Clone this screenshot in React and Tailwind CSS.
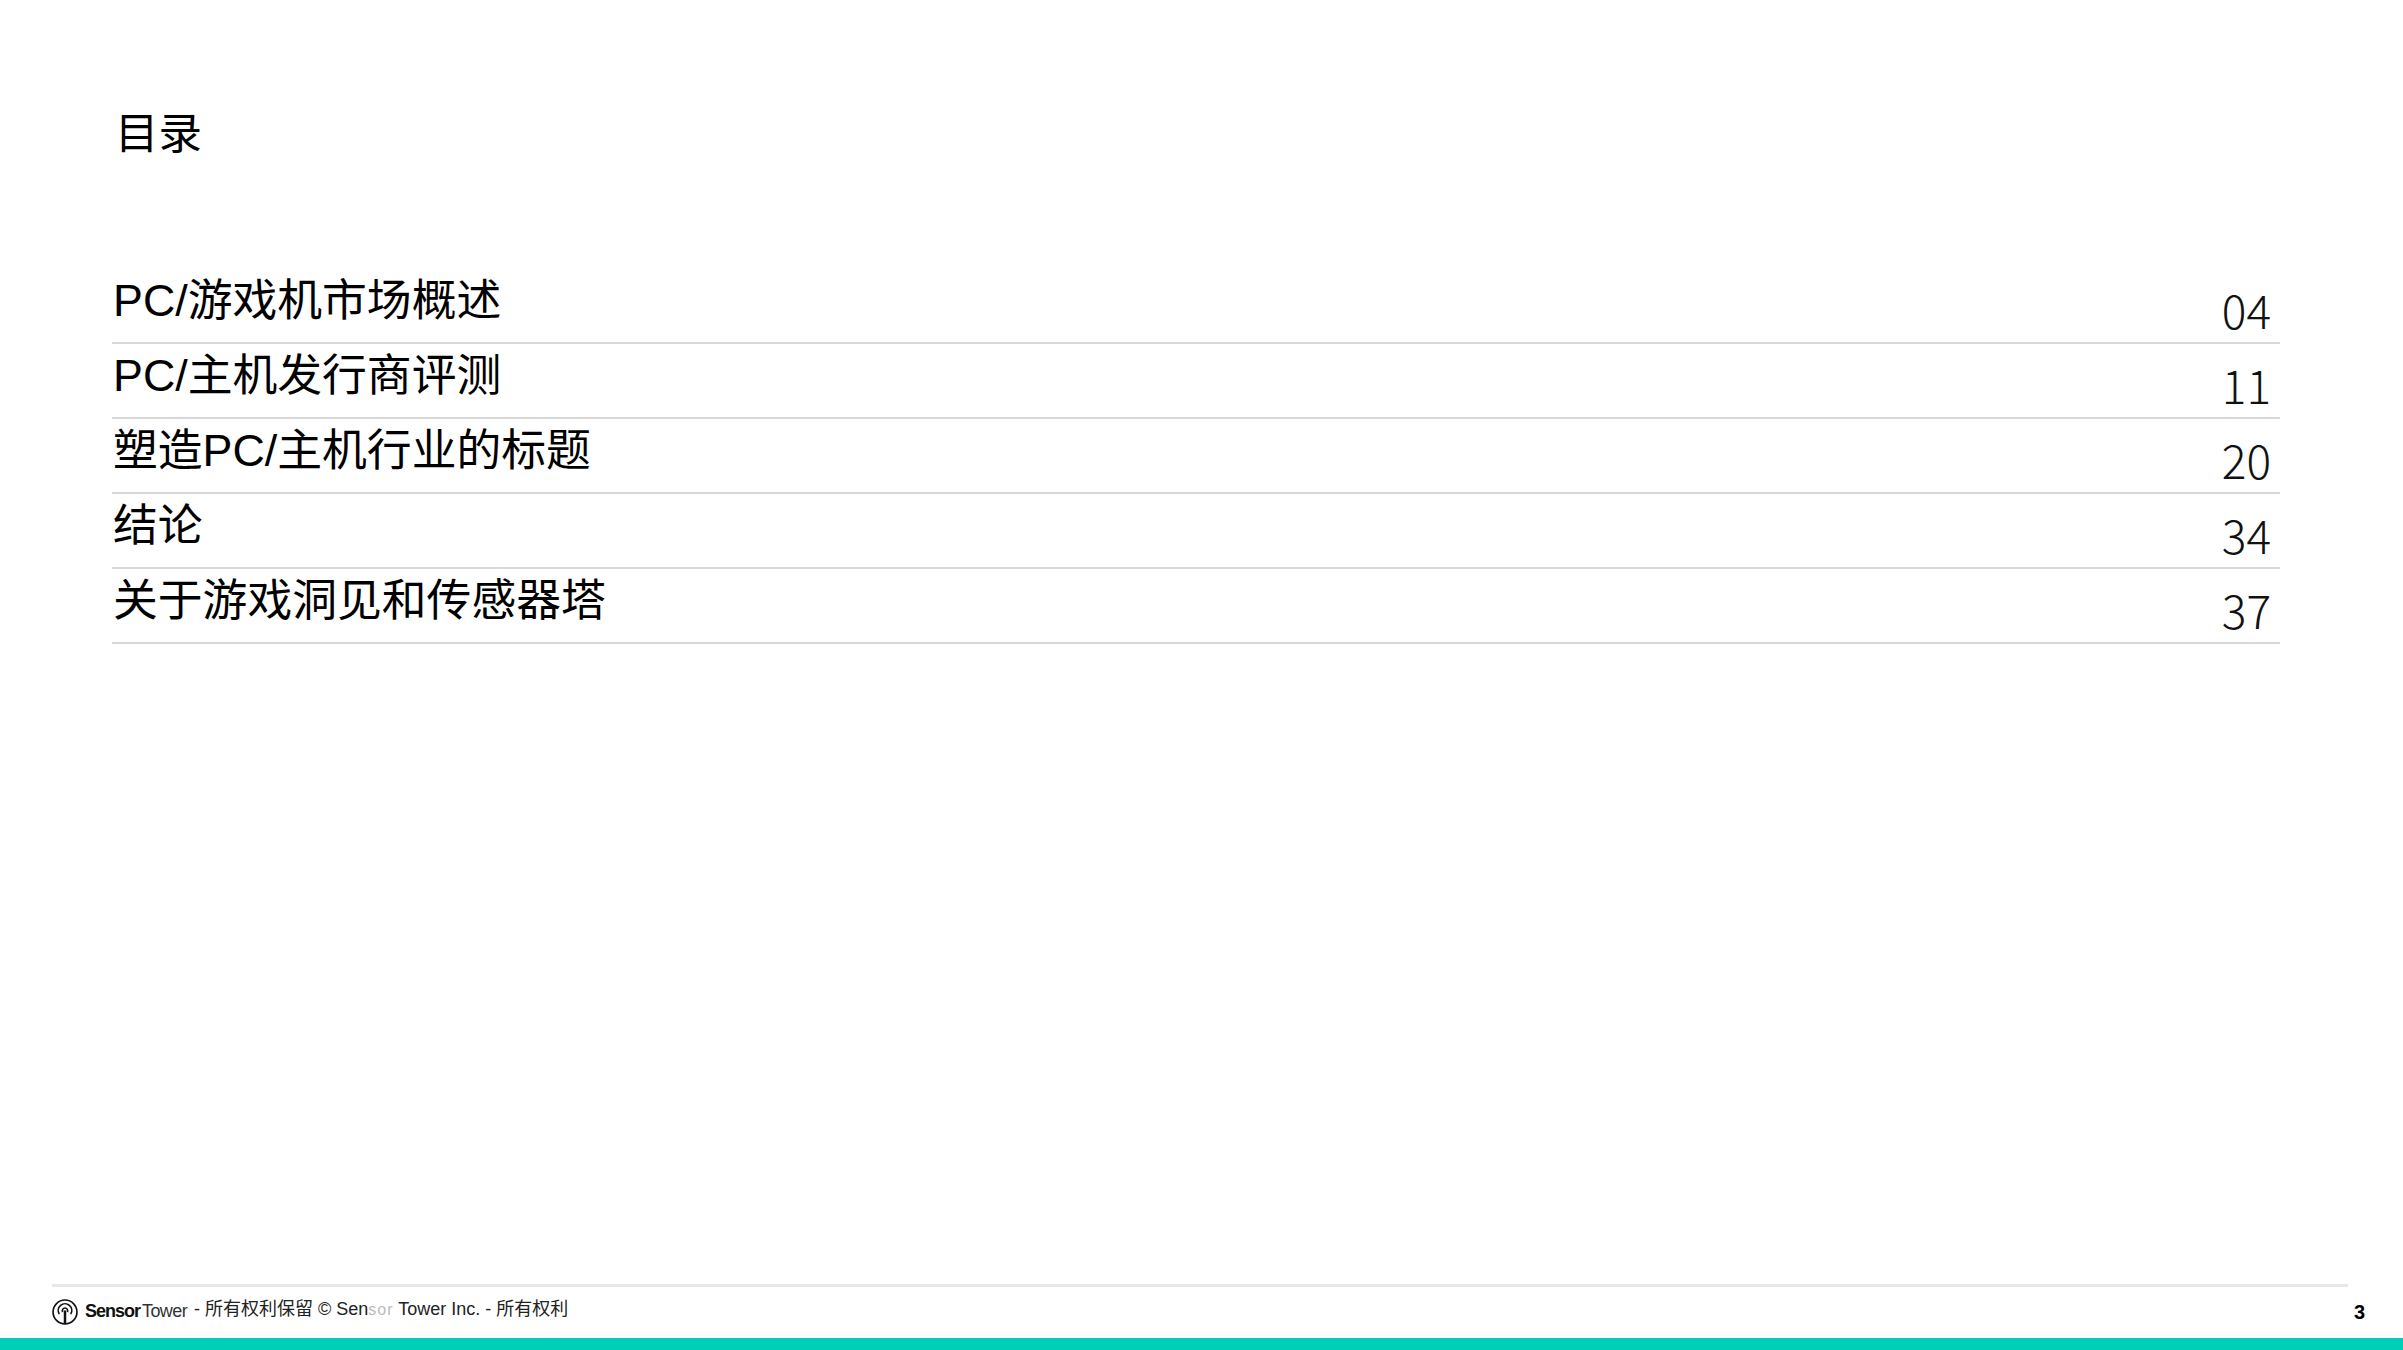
const rows = [
  { title: "PC/游戏机市场概述", page: "04" },
  { title: "PC/主机发行商评测", page: "11" },
  { title: "塑造PC/主机行业的标题", page: "20" },
  { title: "结论", page: "34" },
  { title: "关于游戏洞见和传感器塔", page: "37" },
];

const cjk = "font-['Liberation_Sans','Noto_Sans_CJK_SC',sans-serif]";

const App = () => {
  return (
    <div className={`flex flex-col w-[2403px] h-[1350px] bg-white overflow-hidden ${cjk}`}>
      <main className="flex-1 pl-[112px] pr-[123px] pt-[104px]">
        <h1 className="ml-[3px] text-[43.5px] leading-[60px] text-black">目录</h1>
        <div className="mt-[105px]">
          {rows.map((row) => (
            <div key={row.page} className="flex justify-between h-[75px] border-b-2 border-[#d9d9d9]">
              <span className="ml-[1px] text-[44.8px] leading-[63px] text-black">{row.title}</span>
              <span className="pt-[7px] pr-[9px] text-[46px] leading-[67px] font-light text-[#111] font-['Noto_Sans_CJK_SC',sans-serif]">
                {row.page}
              </span>
            </div>
          ))}
        </div>
      </main>

      <footer className="flex flex-col h-[54px] pl-[52px]">
        <div className="w-[2296px] h-[3px] bg-[#e8e8e8]" />
        <div className="flex flex-1 items-center pr-[38px] pb-[2px]">
          <svg width="26" height="26" viewBox="0 0 25 25" fill="none" stroke="#111" strokeWidth="1.6">
            <circle cx="12.5" cy="12.5" r="11.5" />
            <path d="M7 14.5a6.5 6.5 0 1 1 11 0" />
            <path d="M10.2 12.5a2.6 2.6 0 1 1 4.6 0" />
            <path d="M12.5 11v13" strokeWidth="2.4" />
          </svg>
          <span className="ml-[7px] text-[18px] font-bold tracking-[-1px] text-[#111]">Sensor</span>
          <span className="ml-[2px] text-[18px] tracking-[-0.6px] text-[#333]">Tower</span>
          <span className="ml-[7px] mb-[5px] text-[18px] text-[#222]">
            - 所有权利保留 © Sen<span className="text-[16px] tracking-[1px] text-[#bbb]">sor</span> Tower Inc. - 所有权利
          </span>
          <span className="ml-auto text-[20px] font-bold text-black">3</span>
        </div>
      </footer>

      <div className="h-[12px] bg-[#00cfb8]" />
    </div>
  );
};

export default App;
